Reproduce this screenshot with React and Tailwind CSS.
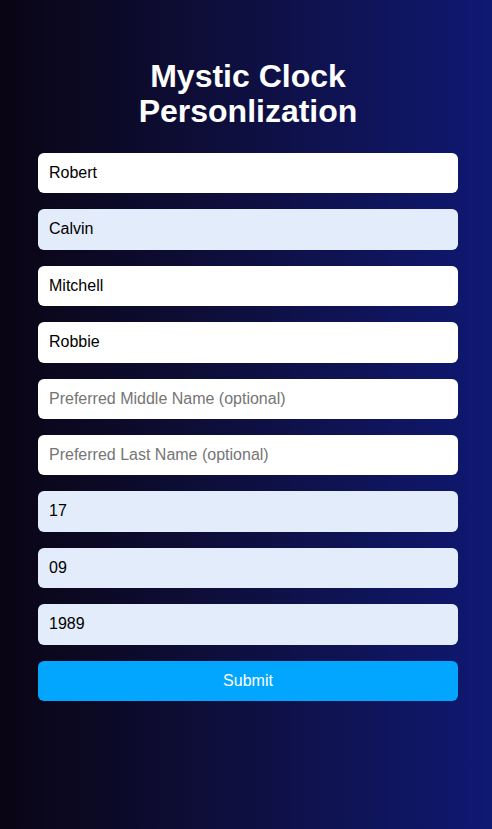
export default function App() {
  const fields = [
    { value: 'Robert', placeholder: 'First Name', filled: false },
    { value: 'Calvin', placeholder: 'Middle Name', filled: true },
    { value: 'Mitchell', placeholder: 'Last Name', filled: false },
    { value: 'Robbie', placeholder: 'Preferred First Name', filled: false },
    { value: '', placeholder: 'Preferred Middle Name (optional)', filled: false },
    { value: '', placeholder: 'Preferred Last Name (optional)', filled: false },
    { value: '17', placeholder: 'Day', filled: true },
    { value: '09', placeholder: 'Month', filled: true },
    { value: '1989', placeholder: 'Year', filled: true },
  ]

  return (
    <div className="min-h-[829px] w-full bg-gradient-to-r from-[#0a0514] to-[#0f1873] font-['Liberation_Sans',Arial,sans-serif]">
      <div className="ml-[38px] w-[420px] pt-[59px]">
        <h1 className="text-center text-[32px] font-bold leading-[35px] text-white">
          Mystic Clock
          <br />
          Personlization
        </h1>
        <form className="mt-[24px] flex flex-col gap-4" onSubmit={(e) => e.preventDefault()}>
          {fields.map((f, i) => (
            <input
              key={i}
              defaultValue={f.value}
              placeholder={f.placeholder}
              className={`w-full rounded-md px-[11px] py-[11px] text-base leading-[18.4px] text-black placeholder:text-[#757575] outline-none ${
                f.filled ? 'bg-[#e3ecfb]' : 'bg-white'
              }`}
            />
          ))}
          <button
            type="submit"
            className="w-full rounded-md bg-[#02a6ff] py-[11px] text-base leading-[18.4px] text-white"
          >
            Submit
          </button>
        </form>
      </div>
    </div>
  )
}
